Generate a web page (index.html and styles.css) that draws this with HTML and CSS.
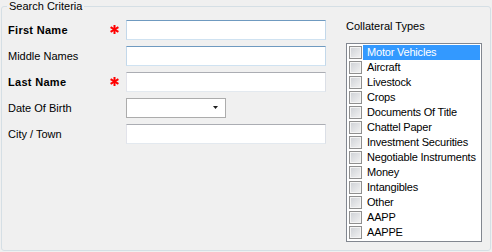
FILE: index.html
```
<!DOCTYPE html>
<html lang="en">
<head>
  <meta charset="UTF-8">
  <title>Search Criteria</title>
  <link rel="stylesheet" href="styles.css">
</head>
<body>
  <fieldset class="criteria">
    <legend>Search Criteria</legend>
    <div class="criteria-body">

      <div class="form-grid">
        <label class="field-label bold">First Name</label>
        <span class="req"><svg width="9" height="9" viewBox="0 0 9 9"><g stroke="#ff0000" stroke-width="2"><line x1="4.5" y1="0" x2="4.5" y2="9"/><line x1="0.6" y1="2.2" x2="8.4" y2="6.8"/><line x1="0.6" y1="6.8" x2="8.4" y2="2.2"/></g></svg></span>
        <input class="text-box hot" type="text">

        <label class="field-label">Middle Names</label>
        <span></span>
        <input class="text-box hot" type="text">

        <label class="field-label bold">Last Name</label>
        <span class="req"><svg width="9" height="9" viewBox="0 0 9 9"><g stroke="#ff0000" stroke-width="2"><line x1="4.5" y1="0" x2="4.5" y2="9"/><line x1="0.6" y1="2.2" x2="8.4" y2="6.8"/><line x1="0.6" y1="6.8" x2="8.4" y2="2.2"/></g></svg></span>
        <input class="text-box" type="text">

        <label class="field-label">Date Of Birth</label>
        <span></span>
        <div class="combo">
          <svg width="5" height="3" viewBox="0 0 5 3"><polygon points="0,0 5,0 2.5,3" fill="#1e1e1e"/></svg>
        </div>

        <label class="field-label">City / Town</label>
        <span></span>
        <input class="text-box" type="text">
      </div>

      <div class="collateral">
        <div class="collateral-title">Collateral Types</div>
        <ul class="check-list">
          <li class="selected"><span class="check"></span><span class="item-text">Motor Vehicles</span></li>
          <li><span class="check"></span><span class="item-text">Aircraft</span></li>
          <li><span class="check"></span><span class="item-text">Livestock</span></li>
          <li><span class="check"></span><span class="item-text">Crops</span></li>
          <li><span class="check"></span><span class="item-text">Documents Of Title</span></li>
          <li><span class="check"></span><span class="item-text">Chattel Paper</span></li>
          <li><span class="check"></span><span class="item-text">Investment Securities</span></li>
          <li><span class="check"></span><span class="item-text">Negotiable Instruments</span></li>
          <li><span class="check"></span><span class="item-text">Money</span></li>
          <li><span class="check"></span><span class="item-text">Intangibles</span></li>
          <li><span class="check"></span><span class="item-text">Other</span></li>
          <li><span class="check"></span><span class="item-text">AAPP</span></li>
          <li><span class="check"></span><span class="item-text">AAPPE</span></li>
        </ul>
      </div>

    </div>
  </fieldset>
</body>
</html>
```

FILE: styles.css
```
* {
  box-sizing: border-box;
}

body {
  margin: 0;
  background: #f0f0f0;
  font-family: 'Liberation Sans', Arial, sans-serif;
  font-size: 11px;
  line-height: 13px;
  color: #000;
}

/* Group box */
.criteria {
  margin: 0 0 0 1px;
  padding: 0;
  width: 490px;
  min-width: 0;
  border: 1px solid #d5dfe5;
  border-radius: 3px;
}

.criteria legend {
  margin-left: 5px;
  padding: 0 2px;
  line-height: 13px;
  color: #000;
}

.criteria-body {
  display: flex;
  align-items: flex-start;
  height: 237px;
  padding: 7px 0 0 6px;
}

/* Left form */
.form-grid {
  display: grid;
  grid-template-columns: 102px 16px 200px;
  grid-auto-rows: 20px;
  row-gap: 6px;
  align-items: center;
}

.field-label {
  line-height: 13px;
}

.field-label.bold {
  font-weight: bold;
  letter-spacing: 0.3px;
}

.req {
  display: flex;
  align-items: center;
  height: 20px;
  padding-bottom: 1px;
}

.text-box {
  display: block;
  width: 200px;
  height: 20px;
  margin: 0;
  padding: 0 2px;
  background: #fff;
  border: 1px solid;
  border-color: #abadb3 #dbdfe6 #e3e9ef #e2e3ea;
  border-radius: 0;
  font: inherit;
  outline: none;
}

.text-box.hot {
  border-color: #6f9ac0 #c3d8ea #cfe2f1 #c3d8ea;
}

.combo {
  display: flex;
  align-items: center;
  justify-content: flex-end;
  width: 100px;
  height: 20px;
  padding: 0 7px 1px 0;
  background: #fff;
  border: 1px solid #acacac;
}

.combo svg {
  display: block;
}

/* Collateral list */
.collateral {
  margin-left: 20px;
}

.collateral-title {
  margin-bottom: 10px;
}

.check-list {
  list-style: none;
  margin: 0;
  width: 136px;
  padding: 1px 1px 1px 2px;
  background: #fff;
  border: 1px solid #828790;
}

.check-list li {
  display: flex;
  align-items: center;
  height: 15px;
}

.check {
  flex: none;
  width: 13px;
  height: 13px;
  border: 1px solid #8f8f8f;
  background: linear-gradient(135deg, #cdd0d5, #f3f3f3);
  box-shadow: inset 0 0 0 1px #f4f4f4;
}

.item-text {
  flex: 1;
  height: 15px;
  margin-left: 1px;
  padding-left: 4px;
  line-height: 15px;
  letter-spacing: -0.2px;
  white-space: nowrap;
}

.selected .item-text {
  background: #3399ff;
  color: #fff;
}
```
